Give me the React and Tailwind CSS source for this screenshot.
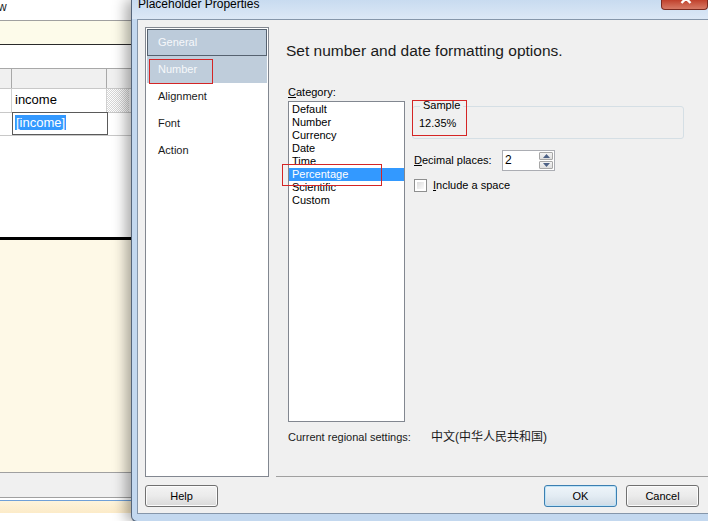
import React from "react";

function Btn({ children, primary }) {
  return (
    <div
      className={
        "w-[73px] h-[22px] flex items-center justify-center rounded-[3px] border text-[11px] leading-[13px] text-black bg-linear-to-b " +
        (primary
          ? "border-[#3c7fb1] from-[#eef5fa] via-[#e3ecf3] to-[#cfdbe6] shadow-[inset_0_0_0_1px_#bfe3f7]"
          : "border-[#707070] from-[#f3f3f3] via-[#ebebeb] to-[#d9d9d9] shadow-[inset_0_0_0_1px_#fcfcfc]")
      }
    >
      {children}
    </div>
  );
}

export default function App() {
  const cats = ["Default", "Number", "Currency", "Date", "Time", "Percentage", "Scientific", "Custom"];
  return (
    <div className="relative w-[708px] h-[521px] overflow-hidden bg-white font-['Liberation_Sans','Noto_Sans_CJK_SC',sans-serif] text-[11px] text-black">
      {/* background application */}
      <div className="flex flex-col h-full">
        <div className="h-[20px] text-[12px] leading-[14px] -ml-[2px] text-[#222]">w</div>
        <div className="h-[25px] border-t border-[#a0a0a0] bg-[#fdfbea] border-b border-b-[#2a2a2a]"></div>
        <div className="h-[23px]"></div>
        <div className="h-[21px] flex border-t border-[#a8a8a8] border-b border-b-[#c8c8c8] bg-[#f0f0f0]">
          <div className="w-[12px] border-r border-[#a8a8a8]"></div>
          <div className="w-[95px] border-r border-[#a8a8a8]"></div>
          <div className="flex-1"></div>
        </div>
        <div className="h-[24px] flex border-b border-[#c8c8c8]">
          <div className="w-[12px] border-r border-[#d0d0d0]"></div>
          <div className="w-[95px] border-r border-[#d0d0d0] pl-[3px] text-[13px] leading-[22px]">income</div>
          <div className="w-[22px] bg-[repeating-conic-gradient(#d6d6d6_0_25%,#ffffff_0_50%)] bg-[length:2px_2px]"></div>
          <div className="flex-1"></div>
        </div>
        <div className="h-[24px] -mt-[1px] flex border-b border-[#c8c8c8]">
          <div className="w-[12px]"></div>
          <div className="w-[96px] border border-[#5a5a5a] pl-[2px] pt-[1px] text-[13px] leading-[18px]">
            <span className="bg-[#3399ff] text-white px-[1px]">[income]</span>
          </div>
          <div className="flex-1"></div>
        </div>
        <div className="h-[101px]"></div>
        <div className="h-[3px] bg-black"></div>
        <div className="h-[232px] bg-[#fef9e7]"></div>
        <div className="h-[26px] border-t border-b border-[#a0a0a0] bg-[#f0f0f0]"></div>
        <div className="h-[2px]"></div>
        <div className="h-[1px] bg-[#6fa0d8]"></div>
        <div className="h-[12px] bg-linear-to-b from-[#fdf4dc] to-[#fcebc8]"></div>
        <div className="flex-1"></div>
      </div>

      {/* dialog window */}
      <div className="absolute left-[131px] top-0 right-0 bottom-[-1px] flex flex-col border-l border-b border-[#55657a] rounded-bl-[6px] bg-[#c3d8ef] shadow-[-5px_0_14px_rgba(0,0,0,0.35)]">
        <div className="relative h-[19px] bg-linear-to-b from-[#c8dbf0] to-[#dce8f6]">
          <div className="absolute left-[6px] top-[-3px] text-[12px] leading-[14px] text-black">Placeholder Properties</div>
          <div className="absolute right-0 top-0 w-[47px] h-[10px] rounded-b-[4px] border border-t-0 border-[#7a2a20] bg-linear-to-b from-[#c0402c] to-[#d77a66] overflow-hidden">
            <svg className="absolute left-[18px] top-[-7px]" width="12" height="11" viewBox="0 0 12 11">
              <path d="M1.5 1 L10.5 10 M10.5 1 L1.5 10" stroke="#fff" strokeWidth="2.4" />
            </svg>
          </div>
        </div>
        <div className="flex-1 ml-[5px] mb-[7px] flex flex-col border border-r-0 border-[#8596aa] bg-[#f0f0f0] pt-[7px] pl-[7px]">
          <div className="h-[450px] flex">
            {/* nav */}
            <div className="w-[124px] h-full border border-[#828790] bg-white p-[1px] flex flex-col">
              <div className="h-[27px] border border-[#566270] bg-[#bccbda] pl-[10px] text-[11px] leading-[25px] text-[#f6f8fa]">General</div>
              <div className="relative h-[27px] bg-[#bfcddb] pl-[11px] text-[11px] leading-[27px] text-[#f6f8fa]">
                Number
                <div className="absolute left-[2px] top-[3px] w-[64px] h-[25px] border border-[#d42525]"></div>
              </div>
              <div className="h-[27px] pl-[11px] leading-[27px] text-[#1a1a1a]">Alignment</div>
              <div className="h-[27px] pl-[11px] leading-[27px] text-[#1a1a1a]">Font</div>
              <div className="h-[27px] pl-[11px] leading-[27px] text-[#1a1a1a]">Action</div>
            </div>
            {/* right panel */}
            <div className="flex-1 ml-[7px] flex flex-col border-b border-[#a0a0a0]">
              <div className="mt-[15px] pl-[10px] text-[15.5px] leading-[18px] text-[#1a1a1a]">Set number and date formatting options.</div>
              <div className="mt-[26px] pl-[12px] flex">
                <div className="w-[117px] flex flex-col">
                  <div className="h-[13px] leading-[13px]">
                    <span className="underline underline-offset-1">C</span>ategory:
                  </div>
                  <div className="relative mt-[2px] h-[321px] border border-[#828790] bg-white pt-[1px]">
                    {cats.map((c) => (
                      <div
                        key={c}
                        className={
                          "h-[13px] leading-[13px] pl-[3px] " +
                          (c === "Percentage" ? "bg-[#3399ff] text-white" : "text-black")
                        }
                      >
                        {c}
                      </div>
                    ))}
                    <div className="absolute left-[-7px] top-[62px] w-[100px] h-[22px] border border-[#d42525]"></div>
                  </div>
                </div>
                <div className="ml-[7px] flex flex-col">
                  <div className="relative mt-[20px] w-[272px] h-[33px] border border-[#d5dfe5] rounded-[3px]">
                    <div className="absolute left-[7px] top-[-8px] px-[3px] bg-[#f0f0f0] leading-[13px]">Sample</div>
                    <div className="pt-[10px] pl-[6px] leading-[13px]">12.35%</div>
                    <div className="absolute left-[-1px] top-[-7px] w-[55px] h-[36px] border border-[#d42525]"></div>
                  </div>
                  <div className="mt-[11px] h-[21px] flex items-center pl-[2px]">
                    <div className="w-[88px] leading-[13px]">
                      <span className="underline underline-offset-1">D</span>ecimal places:
                    </div>
                    <div className="w-[53px] h-[21px] border border-[#abadb3] bg-white flex">
                      <div className="flex-1 pl-[2px] leading-[19px] text-[12px]">2</div>
                      <div className="w-[16px] flex flex-col gap-[1px] p-[1px]">
                        <div className="flex-1 border border-[#a7a7a7] rounded-[1px] bg-linear-to-b from-[#f4f4f4] to-[#dedede] flex items-center justify-center">
                          <svg width="7" height="4" viewBox="0 0 7 4"><path d="M0 4 L3.5 0 L7 4 Z" fill="#4d6185" /></svg>
                        </div>
                        <div className="flex-1 border border-[#a7a7a7] rounded-[1px] bg-linear-to-b from-[#f4f4f4] to-[#dedede] flex items-center justify-center">
                          <svg width="7" height="4" viewBox="0 0 7 4"><path d="M0 0 L7 0 L3.5 4 Z" fill="#4d6185" /></svg>
                        </div>
                      </div>
                    </div>
                  </div>
                  <div className="mt-[8px] flex items-center pl-[2px]">
                    <div className="w-[13px] h-[13px] border border-[#8e8f8f] bg-white p-[2px]">
                      <div className="w-full h-full bg-linear-to-br from-[#dcdcdc] to-[#fbfbfb]"></div>
                    </div>
                    <div className="ml-[6px] leading-[13px]">
                      <span className="underline underline-offset-1">I</span>nclude a space
                    </div>
                  </div>
                </div>
              </div>
              <div className="mt-[9px] pl-[12px] h-[13px] flex items-center leading-[13px] text-[#1a1a1a]">
                <span>Current regional settings:</span>
                <span className="ml-[20px] text-[12px]">中文(中华人民共和国)</span>
              </div>
            </div>
          </div>
          <div className="mt-[8px] flex items-center">
            <Btn>Help</Btn>
            <div className="ml-auto flex gap-[9px] mr-[9px]">
              <Btn primary>OK</Btn>
              <Btn>Cancel</Btn>
            </div>
          </div>
        </div>
      </div>
    </div>
  );
}
